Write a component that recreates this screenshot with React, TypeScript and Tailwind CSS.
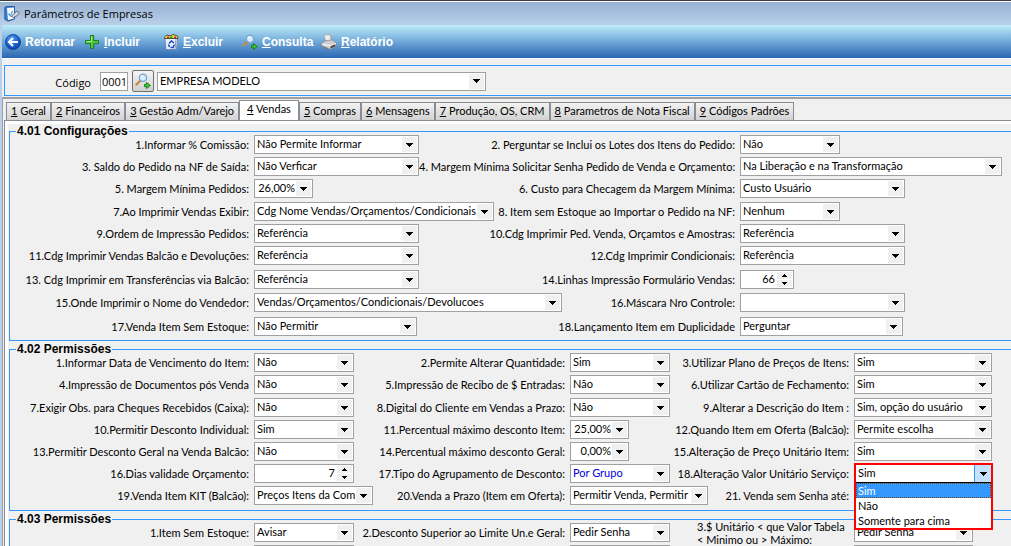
import React from "react";

type Kind = "select" | "spin" | "percent";
interface Control {
  id: string;
  value: string;
  width: string;
  kind?: Kind;
  blue?: boolean;
  open?: string[];
}
interface Field {
  label: string;
  control: Control;
  labelClass?: string;
}

const W = {
  w59: "w-[59px]",
  w54: "w-[54px]",
  w99: "w-[100px]",
  w118: "w-[119px]",
  w138: "w-[138px]",
  w162: "w-[163px]",
  w165: "w-[165px]",
  w240: "w-[240px]",
  w262: "w-[262px]",
  w308: "w-[308px]",
};

const f = (id: string, label: string, value: string, width: string, extra: Partial<Control> = {}, labelClass = ""): Field => ({
  label,
  labelClass,
  control: { id, value, width, ...extra },
});

const config: Field[][] = [
  [f("c1", "1.Informar % Comissão:", "Não Permite Informar", W.w165), f("c2", "2. Perguntar se Inclui os Lotes dos Itens do Pedido:", "Não", W.w99)],
  [f("c3", "3. Saldo do Pedido na NF de Saída:", "Não Verficar", W.w165), f("c4", "4. Margem Mínima Solicitar Senha Pedido de Venda e Orçamento:", "Na Liberação e na Transformação", W.w262)],
  [f("c5", "5. Margem Mínima Pedidos:", "26,00%", W.w59, { kind: "percent" }), f("c6", "6. Custo para Checagem da Margem Mínima:", "Custo Usuário", W.w165)],
  [f("c7", "7.Ao Imprimir Vendas Exibir:", "Cdg Nome Vendas/Orçamentos/Condicionais", W.w240), f("c8", "8. Item sem Estoque ao Importar o Pedido na NF:", "Nenhum", W.w99)],
  [f("c9", "9.Ordem de Impressão Pedidos:", "Referência", W.w165), f("c10", "10.Cdg Imprimir Ped. Venda, Orçamtos e Amostras:", "Referência", W.w165)],
  [f("c11", "11.Cdg Imprimir Vendas Balcão e Devoluções:", "Referência", W.w165), f("c12", "12.Cdg Imprimir Condicionais:", "Referência", W.w165)],
  [f("c13", "13. Cdg Imprimir em Transferências via Balcão:", "Referência", W.w165), f("c14", "14.Linhas Impressão Formulário Vendas:", "66", W.w54, { kind: "spin" })],
  [f("c15", "15.Onde Imprimir o Nome do Vendedor:", "Vendas/Orçamentos/Condicionais/Devolucoes", W.w308), f("c16", "16.Máscara Nro Controle:", "", W.w165)],
  [f("c17", "17.Venda Item Sem Estoque:", "Não Permitir", W.w162), f("c18", "18.Lançamento Item em Duplicidade", "Perguntar", W.w162)],
];

const permissions: Field[][] = [
  [f("p1", "1.Informar Data de Vencimento do Item:", "Não", W.w99), f("p2", "2.Permite Alterar Quantidade:", "Sim", W.w99), f("p3", "3.Utilizar Plano de Preços de Itens:", "Sim", W.w138)],
  [f("p4", "4.Impressão de Documentos pós Venda", "Não", W.w99), f("p5", "5.Impressão de Recibo de $ Entradas:", "Não", W.w99), f("p6", "6.Utilizar Cartão de Fechamento:", "Sim", W.w138)],
  [f("p7", "7.Exigir Obs. para Cheques Recebidos (Caixa):", "Não", W.w99), f("p8", "8.Digital do Cliente em Vendas a Prazo:", "Não", W.w99), f("p9", "9.Alterar a Descrição do Item :", "Sim, opção do usuário", W.w138)],
  [f("p10", "10.Permitir Desconto Individual:", "Sim", W.w99), f("p11", "11.Percentual máximo desconto Item:", "25,00%", W.w59, { kind: "percent" }), f("p12", "12.Quando Item em Oferta (Balcão):", "Permite escolha", W.w138)],
  [f("p13", "13.Permitir Desconto Geral na Venda Balcão:", "Não", W.w99), f("p14", "14.Percentual máximo desconto Geral:", "0,00%", W.w59, { kind: "percent" }), f("p15", "15.Alteração de Preço Unitário Item:", "Sim", W.w138)],
  [f("p16", "16.Dias validade Orçamento:", "7", W.w99, { kind: "spin" }), f("p17", "17.Tipo do Agrupamento de Desconto:", "Por Grupo", W.w99, { blue: true }), f("p18", "18.Alteração Valor Unitário Serviço:", "Sim", W.w138, { open: ["Sim", "Não", "Somente para cima"] })],
  [f("p19", "19.Venda Item KIT (Balcão):", "Preços Itens da Com", W.w118), f("p20", "20.Venda a Prazo (Item em Oferta):", "Permitir Venda, Permitir D", W.w138), f("p21", "21. Venda sem Senha até:", "", W.w138)],
];

const limits: Field[][] = [
  [
    f("l1", "1.Item Sem Estoque:", "Avisar", W.w99),
    f("l2", "2.Desconto Superior ao Limite Un.e Geral:", "Pedir Senha", W.w99),
    f("l3", "3.$ Unitário < que Valor Tabela < Minimo ou > Máximo:", "Pedir Senha", W.w118, {}, "wrap"),
  ],
  [f("l4", "", "", W.w99), f("l5", "", "", W.w99), f("l6", "", "", W.w118)],
];

function Arrow({ up = false, className = "" }: { up?: boolean; className?: string }) {
  return (
    <svg viewBox="0 0 7 4" className={className} shapeRendering="crispEdges" aria-hidden="true">
      <path d={up ? "M3 0h1v1h1v1h1v1H1V2h1V1h1z" : "M0 0h7v1H6v1H5v1H4v1H3V3H2V2H1V1H0z"} fill="#000" />
    </svg>
  );
}

function ControlBox({ c }: { c: Control }) {
  if (c.kind === "spin") {
    return (
      <span className={`${c.width} flex h-[19px] shrink-0 border border-[#a0a0a0] bg-white p-px`}>
        <input id={c.id} defaultValue={c.value} className="min-w-0 flex-1 pr-0.5 text-right outline-none" />
        <span className="flex w-[15px] flex-col gap-px">
          <button aria-label="Aumentar" className="flex flex-1 items-center justify-center bg-[#f0f0f0]">
            <Arrow up className="h-1 w-[7px]" />
          </button>
          <button aria-label="Diminuir" className="flex flex-1 items-center justify-center bg-[#f0f0f0]">
            <svg viewBox="0 0 5 3" className="h-[3px] w-[5px]" shapeRendering="crispEdges"><path d="M0 0h5v1H4v1H3v1H2V2H1V1H0z" /></svg>
          </button>
        </span>
      </span>
    );
  }
  const percent = c.kind === "percent";
  return (
    <span className={`${c.width} relative block h-[19px] shrink-0 border border-[#a0a0a0] bg-white`}>
      <select
        id={c.id}
        aria-label={c.id}
        defaultValue={c.value}
        className={`${c.blue ? "text-[#0000e0]" : "text-black"} ${percent ? "text-right" : "pl-0.5"} block h-4 w-full appearance-none overflow-hidden bg-transparent pr-[17px] leading-4 outline-none`}
      >
        {(c.open ?? [c.value]).map((o) => (
          <option key={o}>{o}</option>
        ))}
      </select>
      <span className="pointer-events-none absolute top-px right-px flex size-[15px] items-center justify-center bg-[#f0f0f0]">
        <Arrow className="h-1 w-[7px]" />
      </span>
      {c.open && (
        <span className="absolute -top-0.5 -left-px z-10 flex w-[139px] flex-col border-2 border-[#ff0000] bg-white">
          <span className="flex h-[17px] items-stretch">
            <span className="flex-1 pl-0.5 leading-4">{c.value}</span>
            <span className="flex w-[17px] items-center justify-center border-l border-[#3399ff] bg-[#c4e1ff]">
              <Arrow className="h-1 w-[7px]" />
            </span>
          </span>
          <ul role="listbox" className="border-t border-black">
            {c.open.map((o) => (
              <li
                key={o}
                role="option"
                aria-selected={o === c.value}
                className={`${o === c.value ? "bg-[#3399ff] text-white outline-1 -outline-offset-1 outline-dotted outline-[#70451b]" : ""} h-[15px] pl-0.5 leading-[15px]`}
              >
                {o}
              </li>
            ))}
          </ul>
        </span>
      )}
    </span>
  );
}

function FieldLabel({ field }: { field: Field }) {
  if (field.labelClass === "wrap") {
    return (
      <span className="flex h-[19px] flex-1 items-center justify-end pr-1">
        <label htmlFor={field.control.id} className="w-[153px] leading-[13px]">{field.label}</label>
      </span>
    );
  }
  return (
    <label htmlFor={field.control.id} className="h-[19px] flex-1 pr-[5px] text-right leading-[19px] whitespace-nowrap">
      {field.label}
    </label>
  );
}

function Row({ fields, cols }: { fields: Field[]; cols: string }) {
  return (
    <div className={`grid ${cols}`}>
      <div className="flex">
        <FieldLabel field={fields[0]} />
      </div>
      {fields.map((field, i) => (
        <div key={field.control.id} className="flex min-w-0">
          <ControlBox c={field.control} />
          {fields[i + 1] && <FieldLabel field={fields[i + 1]} />}
        </div>
      ))}
    </div>
  );
}

function Group({ title, rows, tracks, cols }: { title: string; rows: Field[][]; tracks: string; cols: string }) {
  return (
    <section className="border-y border-l border-[#3399ff] pb-1">
      <h2 className="-mt-[7px] ml-1.5 flex h-3 w-max bg-[#f0f0f0] px-px font-['Liberation_Sans',sans-serif] text-[12px] leading-3 font-bold">
        {title}
      </h2>
      <div className={`-mt-0.5 grid ${tracks}`}>
        {rows.map((r) => (
          <Row key={r[0].control.id} fields={r} cols={cols} />
        ))}
      </div>
    </section>
  );
}

function SearchIcon() {
  return (
    <svg viewBox="0 0 16 16" className="size-4 shrink-0" aria-hidden="true">
      <path d="M1.5 11.5L5 8" stroke="#c98a3c" strokeWidth="2.4" strokeLinecap="round" />
      <circle cx="8" cy="4.8" r="3.6" fill="#d9efff" stroke="#7ba6d8" strokeWidth="1.4" />
      <path d="M6 4.5a2.2 2.2 0 0 1 2-1.8" stroke="#fff" strokeWidth="1.2" fill="none" />
      <path d="M9.5 11.3h2V9.5l4 3-4 3v-1.8h-2z" fill="#3fc02f" stroke="#177a15" strokeWidth=".9" />
    </svg>
  );
}

function BackIcon() {
  return (
    <svg viewBox="0 0 16 16" className="size-4 shrink-0" aria-hidden="true">
      <defs>
        <radialGradient id="ball" cx=".4" cy=".3" r=".8">
          <stop offset="0" stopColor="#5aa2f0" />
          <stop offset=".55" stopColor="#1a62d0" />
          <stop offset="1" stopColor="#083a9c" />
        </radialGradient>
      </defs>
      <circle cx="8" cy="8" r="7.5" fill="url(#ball)" stroke="#0a3890" strokeWidth=".8" />
      <path d="M13 8H4.5M8 4L4 8l4 4" stroke="#fff" strokeWidth="2.1" fill="none" />
    </svg>
  );
}

function PlusIcon() {
  return (
    <svg viewBox="0 0 16 16" className="size-4 shrink-0" aria-hidden="true">
      <path d="M6.500 1.500h3.200v5h4.800v3.200H9.700v4.800H6.500V9.700h-5V6.500h5z" fill="#4cc83a" stroke="#1b7e22" strokeWidth="1" />
      <path d="M7.500 2.500v5h-5" stroke="#a8f08c" fill="none" />
    </svg>
  );
}

function BinIcon() {
  return (
    <svg viewBox="0 0 16 16" className="size-4 shrink-0" aria-hidden="true">
      <path d="M2 4.500h12.500l-1 11H3z" fill="#e8f0ff" stroke="#6b7fae" strokeWidth=".8" />
      <path d="M1.500 3l2.500-2 3 1 3-1.500 4.500 1.500.5 2.500H1.500z" fill="#f4e23c" stroke="#333" strokeWidth=".8" />
      <path d="M4 2.500h2v1.500H4zM11 2.500h2v1.500h-2z" fill="#d8262c" />
      <path d="M7 2.500h2.500v1.500H7z" fill="#2d9a3a" />
      <path d="M6 9.500L8.500 7l2.500 2M11.500 10.500l-1.500 3H7.500M5.500 10.500l1 2.500" stroke="#1644c8" strokeWidth="1.500" fill="none" />
      <path d="M13 5l-1 10" stroke="#8d9bb8" />
    </svg>
  );
}

function PrinterIcon() {
  return (
    <svg viewBox="0 0 16 16" className="size-4 shrink-0" aria-hidden="true">
      <path d="M3 .8l6-.3 1.500 7H4.500z" fill="#ececec" stroke="#999" strokeWidth=".7" />
      <path d="M.8 9.500l3.700-2.800 7-.7 3.700 3.500v2.700l-5.700 3L.8 12z" fill="#cfcfcf" stroke="#888" strokeWidth=".8" />
      <path d="M1 9.800l8.500 2.200 5.500-2.500" stroke="#fff" fill="none" />
      <path d="M9.500 12.200l4.800-2v2l-4.800 2.400z" fill="#444" />
      <path d="M2 13l5 2" stroke="#777" />
    </svg>
  );
}

function TitleIcon() {
  return (
    <svg viewBox="0 0 16 16" className="size-4 shrink-0" aria-hidden="true">
      <path d="M.8 1.500l2-1H10.500v12.500l-6.500 2.200-3.200-2z" fill="#3a7fd0" stroke="#1d4a8c" strokeWidth=".8" />
      <path d="M3 2l7-.5v11L4 14z" fill="#f5faff" />
      <path d="M4.500 7.500l1.800 2.500L8.500 5" stroke="#5aa0d8" strokeWidth="1.300" fill="none" />
      <path d="M7.500 10.500l2.500-3 3-2.500 2.500 2-2.500 2.800-3.500 1.700z" fill="#c9d2dd" stroke="#4c5c70" strokeWidth=".8" />
    </svg>
  );
}

const tools = [
  { text: "Retornar", underline: false, icon: <BackIcon /> },
  { text: "Incluir", underline: true, icon: <PlusIcon /> },
  { text: "Excluir", underline: true, icon: <BinIcon /> },
  { text: "Consulta", underline: true, icon: <SearchIcon /> },
  { text: "Relatório", underline: true, icon: <PrinterIcon /> },
];

const tabs = ["1 Geral", "2 Financeiros", "3 Gestão Adm/Varejo", "4 Vendas", "5 Compras", "6 Mensagens", "7 Produção, OS, CRM", "8 Parametros de Nota Fiscal", "9 Códigos Padrões"];

export default function App() {
  return (
    <div className="flex h-screen flex-col overflow-hidden border-t border-[#3a3a42] bg-[#f0f0f0] font-[Lato,sans-serif] text-[11px] text-black">
      <header className="flex h-6 shrink-0 items-center gap-1 border-t border-white bg-linear-to-b from-[#98b2d2] to-[#b9d0ea] pl-1 font-['Open_Sans',sans-serif]">
        <TitleIcon />
        <h1 className="pt-px">Parâmetros de Empresas</h1>
      </header>
      <div className="flex min-h-0 flex-1 border-l-2 border-[#b9d0ea]">
        <div className="flex min-w-0 flex-1 flex-col">
          <nav className="flex h-[33px] shrink-0 items-center bg-linear-to-b from-[#c0edfb] via-[#71a9d8] to-[#2a66b2] pl-[3px] font-['Liberation_Sans',sans-serif] text-[12px] font-bold text-white">
            {tools.map((t) => (
              <button key={t.text} className="flex w-[79px] items-center gap-1 whitespace-nowrap">
                {t.icon}
                <span>
                  {t.underline ? <u>{t.text[0]}</u> : t.text[0]}
                  {t.text.slice(1)}
                </span>
              </button>
            ))}
          </nav>
          <div className="h-px shrink-0 bg-white" />
          <div className="mt-1.5 ml-0.5 flex h-[31px] shrink-0 items-center border-y border-l border-[#3399ff] pt-px">
            <label htmlFor="codigo" className="w-[86px] pt-1 text-right font-['Open_Sans',sans-serif]">Código</label>
            <input id="codigo" defaultValue="0001" className="ml-[9px] h-[19px] w-7 border border-[#a0a0a0] bg-white pl-px font-['Open_Sans',sans-serif]" />
            <button aria-label="Pesquisar" className="mr-[3px] ml-1 flex size-[22px] items-center justify-center rounded-xs border border-[#707070] bg-linear-to-b from-[#f4f4f4] to-[#d0d0d0]">
              <SearchIcon />
            </button>
            <ControlBox c={{ id: "empresa", value: "EMPRESA MODELO", width: "w-[329px]" }} />
          </div>
          <div className="mt-px h-0.5 shrink-0 bg-[#a0a0a0]" />
          <div className="flex flex-1 flex-col border-l border-[#a0a0a0]">
            <div role="tablist" className="mt-px flex h-5 shrink-0 items-end pl-[3px]">
              {tabs.map((t) => (
                <button
                  key={t}
                  role="tab"
                  aria-selected={t[0] === "4"}
                  className={`${t[0] === "4" ? "h-5 bg-white px-[7px] pb-0.5" : "h-[18px] bg-linear-to-b from-[#f2f2f2] to-[#d2d2d2] px-1"} border border-b-0 border-[#898c95] whitespace-nowrap`}
                >
                  <u>{t[0]}</u>
                  {t.slice(1)}
                </button>
              ))}
            </div>
            <main className="ml-px flex flex-1 flex-col border-t border-l border-[#898c95]">
              <div className="flex flex-1 flex-col gap-2 border-t-[3px] border-l-[3px] border-white pt-[7px] pl-px">
                <Group title="4.01 Configurações" rows={config} cols="grid-cols-[244px_1fr_271px]" tracks="grid-rows-[22px_22px_23px_22px_22px_24px_23px_24px_19px]" />
                <Group title="4.02 Permissões" rows={permissions} cols="grid-cols-[244px_316fr_284fr_157px]" tracks="grid-rows-[22px_23px_22px_22px_22px_22px_20px]" />
                <Group title="4.03 Permissões" rows={limits} cols="grid-cols-[244px_316fr_284fr_157px]" tracks="grid-rows-[22px_22px]" />
              </div>
            </main>
          </div>
        </div>
      </div>
    </div>
  );
}
